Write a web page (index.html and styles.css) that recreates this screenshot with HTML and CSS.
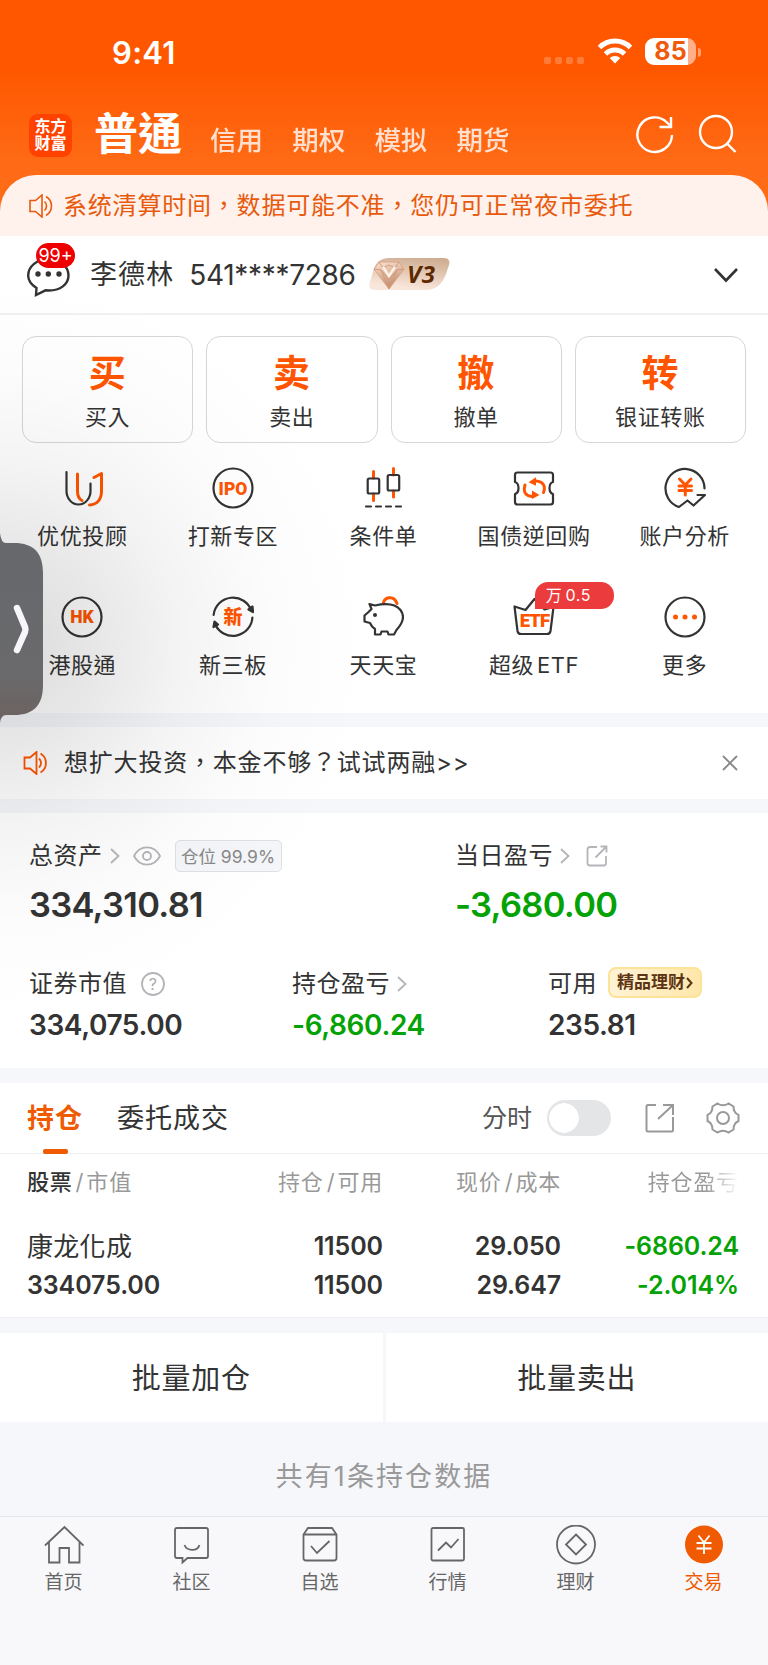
FILE: index.html
```
<!DOCTYPE html>
<html lang="zh-Hant">
<head>
  <title>交易</title>
  <meta charset="UTF-8">
  <meta name="viewport" content="width=device-width, initial-scale=1.0">
  <link rel="stylesheet" href="styles.css">
</head>
<body>
  <header class="top">
    <div class="status">
      <span class="time">9:41</span>
      <div class="status-icons">
        <div class="signal"><i></i><i></i><i></i><i></i></div>
        <svg class="wifi" width="36" height="26" viewBox="0 0 36 26" fill="none" stroke="#fff" stroke-width="5">
          <path d="M2.5 9.5a22 22 0 0 1 31 0"/>
          <path d="M8.5 16a13.5 13.5 0 0 1 19 0"/>
          <path d="M18 25.5l-5.3-5.4a7.6 7.6 0 0 1 10.6 0z" fill="#fff" stroke="none"/>
        </svg>
        <div class="battery">85</div>
        <div class="battery-cap"></div>
      </div>
    </div>
    <nav class="nav">
      <div class="logo">东方<br>财富</div>
      <span class="nav-main">普通</span>
      <span class="nav-item">信用</span>
      <span class="nav-item">期权</span>
      <span class="nav-item">模拟</span>
      <span class="nav-item">期货</span>
      <div class="nav-icons">
        <svg width="40" height="40" viewBox="0 0 40 40" fill="none" stroke="#fff" stroke-width="2.4">
          <path d="M37 21a17.3 17.3 0 1 1-5-12.500l4 4"/>
          <path d="M36 3v10H24.500"/>
        </svg>
        <svg width="40" height="40" viewBox="0 0 40 40" fill="none" stroke="#fff" stroke-width="2.4">
          <circle cx="18" cy="18" r="16"/>
          <path d="M29 29.500l8.500 8.500"/>
        </svg>
      </div>
    </nav>
  </header>

  <div class="notice">
    <svg width="24" height="24" viewBox="0 0 24 24" fill="none" stroke="#e85a0c" stroke-width="1.600">
      <path d="M1 6.500h5.500L13 1v22l-6.500-5.500H1z"/>
      <path d="M15.500 7.500a6 6 0 0 1 0 9M17 2.500a11 11 0 0 1 0 19"/>
    </svg>
    <span>系统清算时间，数据可能不准，您仍可正常夜市委托</span>
  </div>

  <section class="account">
    <div class="message">
      <svg width="46" height="42" viewBox="0 0 46 42" fill="none" stroke="#333" stroke-width="2.400">
        <path d="M10.500 32C5 28.500 2.200 24.500 2.200 19.500C2.200 10.500 11 3 22.500 3s20 7.500 20 16.500S34 34.500 23 34.500L19.500 34.300L10 39z"/>
        <g fill="#333" stroke="none"><circle cx="12" cy="18" r="2.700"/><circle cx="22.300" cy="18" r="2.700"/><circle cx="33" cy="18" r="2.700"/></g>
      </svg>
      <span class="message-count">99+</span>
    </div>
    <span class="name">李德林</span>
    <span class="number">541****7286</span>
    <svg class="level" width="82" height="33" viewBox="0 0 82 33">
      <defs>
        <linearGradient id="level-bg" x1="1" y1="0" x2="0.700" y2="1">
          <stop offset="0" stop-color="#cba88b"/><stop offset="1" stop-color="#f9e6da"/>
        </linearGradient>
        <linearGradient id="gem" x1="0" y1="0" x2="0.300" y2="1">
          <stop offset="0" stop-color="#fbe3d2"/><stop offset="1" stop-color="#c28d70"/>
        </linearGradient>
      </defs>
      <path d="M20 0h54q8 0 6 7l-3 9q-6 16-20 16H6q-7 0-5.500-7l4-13Q8 0 20 0z" fill="url(#level-bg)"/>
      <path d="M10 4h20l5 7-15 20L5 11z" fill="url(#gem)" stroke="#dba587"/>
      <path d="M5 11l7 1 8 10 8-10 7-1M10 4l4 6 6-3 6 3 4-6M12 12l8 19 8-19" fill="none" stroke="#d29b7b"/>
      <path d="M14 9l6 9 6-9" fill="none" stroke="#fff2e8" stroke-width="2.500"/>
      <text x="38" y="25" class="level-text" textLength="28">V3</text>
    </svg>
    <svg class="down" width="26" height="16" viewBox="0 0 26 16" fill="none" stroke="#333" stroke-width="2.600"><path d="M2 2l11 11.500L24 2"/></svg>
  </section>

  <section class="trade">
    <div class="trade-btn"><b>买</b><span>买入</span></div>
    <div class="trade-btn"><b>卖</b><span>卖出</span></div>
    <div class="trade-btn"><b>撤</b><span>撤单</span></div>
    <div class="trade-btn"><b>转</b><span>银证转账</span></div>
  </section>

  <section class="grid">
    <div class="cell">
      <svg class="icon" viewBox="0 0 42 42">
        <path d="M5.500 5v19c0 7 5 13.500 12 13.500S29.500 31 29.500 24v-7.500"/>
        <path class="o" d="M16.500 7v17c0 5 1.500 8 4.500 9.500M33 10.500l7.500-4V24c0 8-4 13.500-12 14"/>
      </svg>
      <span>优优投顾</span>
    </div>
    <div class="cell">
      <svg class="icon" viewBox="0 0 42 42"><circle cx="21" cy="21" r="19.500"/><text x="21" y="27.500" font-size="17.500">IPO</text></svg>
      <span>打新专区</span>
    </div>
    <div class="cell">
      <svg class="icon" viewBox="0 0 42 42">
        <path class="o" d="M11.500 4.500V11M11.500 27v6.500M31.500 1.500V8M31.500 24v6"/>
        <rect x="5.700" y="11.500" width="11.500" height="15" rx="1.500"/><rect x="25.700" y="8" width="11.500" height="15.500" rx="1.500"/>
        <path d="M4 39.500h36" stroke-dasharray="5 5"/>
      </svg>
      <span>条件单</span>
    </div>
    <div class="cell">
      <svg class="icon" viewBox="0 0 42 42">
        <path d="M4.500 5.500h33q2.500 0 2.500 2.500v7q-3.500 1-3.500 6t3.500 6v8q0 2.500-2.500 2.500h-33Q2 37.500 2 35v-8q3.500-1 3.500-6T2 15V8q0-2.500 2.500-2.500z"/>
        <path class="o" d="M19 29.500C12.500 29 10 25 12 18M23 14c7 .5 10 5 7.500 11.500"/>
        <path class="of" d="M15.500 15.200l7.500-5v8.500zM26.500 28l-7.500-4.500V32z"/>
      </svg>
      <span>国债逆回购</span>
    </div>
    <div class="cell">
      <svg class="icon" viewBox="0 0 42 42">
        <path d="M40.500 21.500A19.500 19.500 0 1 0 15 40l8.500-6.500 6 5L41 28h-7.500"/>
        <path class="o" d="M15.500 12l5.800 6 5.700-6M21.300 18v10M15 19h12.500M15 23.500h12.500"/>
      </svg>
      <span>账户分析</span>
    </div>
    <div class="cell">
      <svg class="icon" viewBox="0 0 42 42"><circle cx="21" cy="21" r="19.500"/><text x="21" y="27.300" font-size="17.500">HK</text></svg>
      <span>港股通</span>
    </div>
    <div class="cell">
      <svg class="icon" viewBox="0 0 42 42">
        <path d="M1.600 19A19.500 19.500 0 0 1 39.500 15M40.400 21.500A19.500 19.500 0 0 1 3 28"/>
        <path d="M36.500 13.500l4.500 2.500-.5-5.500zM1.500 31l1-5.500 3.500 3z" fill="#333"/>
        <text x="21" y="28" font-size="19">新</text>
      </svg>
      <span>新三板</span>
    </div>
    <div class="cell">
      <svg class="icon" viewBox="0 0 42 42">
        <path class="o" d="M21.500 6.500c2-6.500 11-6.500 13.500 1"/>
        <path d="M13 9.500c9-2 20-2 25.500 4.500 4.500 6 2 13.500-4 20L32 38.500h-5.500l-1-3h-6l-1 3H13V33c-2.500-1.500-4-3.500-5-6l-5.500-1.500v-6L6 16.500 9.500 13 7.500 8z"/>
        <circle cx="13" cy="19" r="2" fill="#333" stroke="none"/>
      </svg>
      <span>天天宝</span>
    </div>
    <div class="cell">
      <svg class="icon" viewBox="0 0 42 42">
        <path d="M1.500 10.500l3 24.500q.5 3 3.500 3h26q3 0 3.500-3L40.500 11l-9 2.500L21.500 3l-9 11z"/>
        <text class="narrow" x="21.500" y="31" font-size="18.500">ETF</text>
      </svg>
      <em class="tag">万 0.5</em>
      <span class="mixed">超级 ETF</span>
    </div>
    <div class="cell">
      <svg class="icon" viewBox="0 0 42 42"><circle cx="21" cy="21" r="19.500"/><g class="of"><circle cx="11.500" cy="21" r="2.500"/><circle cx="21" cy="21" r="2.500"/><circle cx="30.500" cy="21" r="2.500"/></g></svg>
      <span>更多</span>
    </div>
  </section>

  <section class="promo">
    <svg width="25" height="24" viewBox="0 0 24 24" fill="none" stroke="#ff5500" stroke-width="1.800">
      <path d="M1 6.500h5.500L13 1v22l-6.500-5.500H1z"/>
      <path d="M15.500 7.500a6 6 0 0 1 0 9M17 2.500a11 11 0 0 1 0 19"/>
    </svg>
    <span>想扩大投资，本金不够？试试两融&gt;&gt;</span>
    <svg class="close" width="16" height="16" viewBox="0 0 16 16" stroke="#888" stroke-width="1.800"><path d="M1 1l14 14M15 1L1 15"/></svg>
  </section>

  <section class="assets">
    <div class="totals">
      <div class="asset">
        <div class="asset-label">总资产
          <svg class="more" width="10" height="16" viewBox="0 0 10 16"><path d="M1 1l7.500 7L1 15"/></svg>
          <svg class="eye" width="28" height="20" viewBox="0 0 28 20"><path d="M1 10C7-1.500 21-1.500 27 10 21 21.500 7 21.500 1 10z"/><circle cx="14" cy="10" r="4"/></svg>
          <span class="ratio">仓位 99.9%</span>
        </div>
        <div class="asset-value">334,310.81</div>
      </div>
      <div class="asset">
        <div class="asset-label">当日盈亏
          <svg class="more" width="10" height="16" viewBox="0 0 10 16"><path d="M1 1l7.500 7L1 15"/></svg>
          <svg class="share" width="22" height="22" viewBox="0 0 22 22"><path d="M11 2H4Q1.500 2 1.500 4.500v13.500Q1.500 20.500 4 20.500h13.500q2.500 0 2.500-2.500v-7M9.500 12.500L20 2M14.500 1.500H20.500V7.500"/></svg>
        </div>
        <div class="asset-value green">-3,680.00</div>
      </div>
    </div>
    <div class="details">
      <div class="asset">
        <div class="asset-label">证券市值
          <svg class="help" width="24" height="24" viewBox="0 0 24 24"><circle cx="12" cy="12" r="11"/><text x="12" y="17.500">?</text></svg>
        </div>
        <div class="asset-value">334,075.00</div>
      </div>
      <div class="asset">
        <div class="asset-label">持仓盈亏
          <svg class="more" width="10" height="16" viewBox="0 0 10 16"><path d="M1 1l7.500 7L1 15"/></svg>
        </div>
        <div class="asset-value green">-6,860.24</div>
      </div>
      <div class="asset">
        <div class="asset-label">可用 <span class="wealth">精品理财<svg width="7" height="12" viewBox="0 0 7 12" fill="none" stroke="#5c3413" stroke-width="2"><path d="M1 1l4.500 5L1 11"/></svg></span></div>
        <div class="asset-value">235.81</div>
      </div>
    </div>
  </section>

  <section class="positions">
    <div class="tabs">
      <span class="tab active">持仓</span>
      <span class="tab">委托成交</span>
      <span class="minute">分时</span>
      <div class="switch"></div>
      <svg class="export" width="30" height="30" viewBox="0 0 30 30"><path d="M11 2H3Q1.500 2 1.500 3.500V27q0 1.500 1.500 1.500h23.500q1.500 0 1.500-1.500V14M13 16L27.500 2.500M18 2h10V12"/></svg>
      <svg class="gear" width="34" height="32" viewBox="0 0 34 32"><path d="M11.500 1.500q5.500 3.500 11 0l5 3q0 6.500 5 8.500v6q-5 2-5 8.500l-5 3q-5.500-3.500-11 0l-5-3q0-6.500-5-8.500v-6q5-2 5-8.500z"/><circle cx="17" cy="16" r="6"/></svg>
    </div>
    <div class="row head">
      <span><strong>股票</strong><i>/</i>市值</span>
      <span>持仓<i>/</i>可用</span>
      <span>现价<i>/</i>成本</span>
      <span class="fade">持仓盈亏</span>
    </div>
    <div class="row stock">
      <span class="stock-name">康龙化成</span><span>11500</span><span>29.050</span><span class="green">-6860.24</span>
      <span>334075.00</span><span>11500</span><span>29.647</span><span class="green">-2.014%</span>
    </div>
  </section>

  <section class="batch">
    <div>批量加仓</div>
    <div>批量卖出</div>
  </section>

  <p class="summary">共有1条持仓数据</p>

  <footer class="tabbar">
    <div class="tabbar-item">
      <svg viewBox="0 0 40 40"><path d="M1 20.500L20.500 2 39.500 20.500M5 17v20.500h10.500V23H25v14.500h10.500V17"/></svg>
      首页
    </div>
    <div class="tabbar-item">
      <svg viewBox="0 0 40 40"><path d="M5 3h29q2 0 2 2v26q0 2-2 2H15.500L10.500 37.500V33H5q-2 0-2-2V5q0-2 2-2zM12.500 20c2.500 6.500 13 6.500 15 0"/></svg>
      社区
    </div>
    <div class="tabbar-item">
      <svg viewBox="0 0 40 40"><path d="M8 3h24l4.500 6.500V33q0 2.500-2.500 2.500H6Q3.500 35.500 3.500 33V9.500zM3.500 9.500h33M11 21l6 7L29.500 16"/></svg>
      自选
    </div>
    <div class="tabbar-item">
      <svg viewBox="0 0 40 40"><rect x="3.500" y="3" width="32.500" height="32.500" rx="1.500"/><path d="M10 25.500l8-8 5 5L30.500 14"/></svg>
      行情
    </div>
    <div class="tabbar-item">
      <svg viewBox="0 0 40 40"><circle cx="20" cy="19.500" r="19"/><path d="M20 9.500l10 10-10 10-10-10z"/></svg>
      理财
    </div>
    <div class="tabbar-item current">
      <svg viewBox="0 0 40 40"><circle cx="20" cy="19.500" r="19"/><path d="M14.500 10.500l5.500 7 5.500-7M20 17.500V29M12.500 18h15M12.500 23.500h15"/></svg>
      交易
    </div>
  </footer>

  <!-- floating side handle and its shadow -->
  <div class="side-shade"></div>
  <svg class="side-handle" width="44" height="190" viewBox="0 0 44 190">
    <defs><linearGradient id="handle" x1="0" y1="0" x2="0" y2="1"><stop offset="0" stop-color="#66686c"/><stop offset="0.750" stop-color="#6a6a6c"/><stop offset="1" stop-color="#6b625f"/></linearGradient></defs>
    <path d="M0 0q1 10 6 10h8c20 0 29 10 29 30v112c0 20-9 30-29 30H6q-5 0-6 8z" fill="url(#handle)"/>
    <path d="M17 75l8 19q1 2.500 0 5l-8 18" fill="none" stroke="#f7f6fb" stroke-width="6.500" stroke-linecap="round" stroke-linejoin="round"/>
  </svg>
</body>
</html>
```
FILE: styles.css
```
* {
  box-sizing: border-box;
}
body {
  position: relative;
  margin: 0;
  width: 768px;
  height: 1665px;
  overflow: hidden;
  background: #f6f7fa;
  color: #333;
  font-family: Inter, "Noto Sans CJK TC", sans-serif;
  font-size: 24px;
  line-height: 1;
}
svg {
  display: block;
  flex: none;
}
span, em {
  white-space: nowrap;
}
.green {
  color: #05a205;
}

/* header */
.top {
  height: 212px;
  margin-bottom: -37px;
  background: linear-gradient(#ff5700 0, #ff5700 70px, #ff6a15 160px, #ff6c18);
  color: #fff;
}
.status {
  display: flex;
  justify-content: space-between;
  align-items: center;
  height: 104px;
  padding: 0 67px 0 112px;
}
.time {
  font-size: 31px;
  font-weight: 600;
  letter-spacing: .3px;
}
.status-icons {
  display: flex;
  align-items: center;
}
.signal {
  display: flex;
  gap: 4px;
  margin: 16px 13px 0 0;
}
.signal i {
  width: 7px;
  height: 7px;
  border-radius: 2px;
  background: rgba(255, 255, 255, .22);
}
.wifi {
  margin-top: -2px;
}
.battery {
  width: 51px;
  height: 27px;
  margin: -1px 0 0 12px;
  border-radius: 9px;
  background: linear-gradient(90deg, #fff 43px, #ffb08a 43px);
  color: #f05a0c;
  font-size: 25px;
  font-weight: 700;
  line-height: 27px;
  text-align: center;
}
.battery-cap {
  width: 3px;
  height: 9px;
  margin-left: 2px;
  border-radius: 0 3px 3px 0;
  background: #ffa071;
}
.nav {
  display: flex;
  align-items: center;
  height: 62px;
  padding: 0 30px 0 29px;
}
.logo {
  width: 43px;
  height: 43px;
  padding-top: 4px;
  border-radius: 9px;
  background: #ff4200;
  font-family: "Liberation Serif", "Noto Sans CJK SC", serif;
  font-size: 16px;
  font-weight: 700;
  line-height: 17px;
  text-align: center;
}
.nav-main {
  margin: -3px 28px 0 22px;
  font-size: 44px;
  font-weight: 700;
}
.nav-item {
  margin: 11px 29.2px 0 0;
  font-size: 26.500px;
  font-weight: 500;
  opacity: .8;
}
.nav-icons {
  display: flex;
  gap: 23px;
  margin-left: auto;
  margin-top: -2px;
}
.notice {
  display: flex;
  align-items: center;
  gap: 10px;
  height: 61px;
  padding-left: 29px;
  border-radius: 36px 36px 0 0;
  background: #fff1ec;
  color: #e85a0c;
  letter-spacing: .8px;
}

/* account */
.account {
  display: flex;
  align-items: center;
  height: 79px;
  padding: 0 29px 0 26px;
  border-bottom: 2px solid #f1f1f2;
  background: #fff;
}
.message {
  position: relative;
  margin-top: 5px;
}
.message-count {
  position: absolute;
  top: -13px;
  left: 10px;
  width: 39px;
  height: 25px;
  border-radius: 13px;
  background: #ee0000;
  color: #fff;
  font-size: 18px;
  line-height: 25px;
  text-align: center;
}
.name {
  margin-left: 18px;
  font-size: 27px;
  letter-spacing: 1.1px;
}
.number {
  margin-left: 15px;
  font-size: 28px;
  letter-spacing: -.3px;
}
.level {
  margin-left: 13px;
}
.level-text {
  fill: #5d2900;
  font: italic 700 24px "Open Sans", sans-serif;
}
.down {
  margin-left: auto;
}

/* trade buttons */
.trade {
  display: grid;
  grid-template-columns: repeat(4, 1fr);
  gap: 13px;
  padding: 21px 22px 0;
  background: #fff;
}
.trade-btn {
  display: flex;
  flex-direction: column;
  align-items: center;
  gap: 14px;
  height: 107px;
  padding-top: 18px;
  border: 1px solid #d5d6d8;
  border-radius: 14px;
  font-size: 22px;
  letter-spacing: .7px;
}
.trade-btn b {
  color: #ff5500;
  font-size: 37px;
}

/* function grid */
.grid {
  display: grid;
  grid-template-columns: repeat(5, 150.6px);
  grid-auto-rows: 128.500px;
  height: 270px;
  padding: 24px 7px 0;
  background: #fff;
}
.cell {
  position: relative;
  display: flex;
  flex-direction: column;
  align-items: center;
  gap: 16px;
  font-size: 22px;
  letter-spacing: .6px;
}
.mixed {
  word-spacing: -4px;
}
.icon {
  width: 42px;
  height: 42px;
  fill: none;
  stroke: #333;
  stroke-width: 2.200;
  stroke-linecap: round;
  stroke-linejoin: round;
}
.icon .o {
  stroke: #ff5500;
  stroke-width: 3;
}
.icon .of {
  fill: #ff5500;
  stroke: none;
}
.icon text {
  fill: #ff5500;
  stroke: none;
  font-family: Roboto, "Noto Sans CJK SC", sans-serif;
  font-weight: 900;
  letter-spacing: 0;
  text-anchor: middle;
}
.icon .narrow {
  letter-spacing: -1px;
}
.tag {
  position: absolute;
  top: -14px;
  left: 76px;
  width: 79px;
  height: 27px;
  padding-left: 11px;
  border-radius: 13px 13px 13px 0;
  background: #ec3b3d;
  color: #fff;
  font-size: 16px;
  font-style: normal;
  line-height: 27px;
  word-spacing: -2px;
}

/* promo */
.promo {
  display: flex;
  align-items: center;
  gap: 16px;
  height: 72px;
  margin: 14px 0;
  padding: 0 30px 0 23px;
  background: #fff;
  letter-spacing: .8px;
}
.close {
  margin-left: auto;
}

/* assets */
.assets {
  height: 255px;
  padding: 25px 29px 0;
  background: #fff;
}
.totals {
  display: grid;
  grid-template-columns: 426px 1fr;
  height: 128px;
}
.details {
  display: grid;
  grid-template-columns: 263px 256px 1fr;
}
.asset-label {
  display: flex;
  align-items: center;
  height: 36px;
  letter-spacing: .5px;
}
.asset-value {
  font-size: 28px;
  font-weight: 600;
  letter-spacing: -.4px;
  margin-top: 9px;
}
.totals .asset-value {
  margin-top: 14px;
  font-size: 34.500px;
  letter-spacing: -.7px;
}
.assets svg {
  fill: none;
}
.more, .share, .eye, .help {
  stroke: #b4b5b8;
  stroke-width: 1.800;
}
.more {
  margin-left: 7px;
}
.eye {
  margin-left: 13px;
}
.share {
  margin-left: 16px;
}
.help {
  margin-left: 14px;
}
.help text {
  fill: #aaa;
  stroke: none;
  font-size: 16px;
  text-anchor: middle;
}
.ratio {
  margin-left: 14px;
  width: 107px;
  height: 32px;
  border: 1px solid #dfe0e4;
  border-radius: 5px;
  background: #f5f6f9;
  color: #888;
  font-size: 17.500px;
  letter-spacing: 0;
  line-height: 31px;
  text-align: center;
}
.wealth {
  display: flex;
  align-items: center;
  justify-content: center;
  gap: 1px;
  width: 94px;
  height: 31px;
  margin: -3px 0 0 11px;
  border: 2px solid #fee297;
  border-radius: 8px;
  background: linear-gradient(90deg, #fff3d6, #ffe7ab);
  color: #5c3413;
  font-size: 17px;
  font-weight: 700;
  letter-spacing: 0;
}

/* positions */
.positions {
  height: 235px;
  margin-top: 15px;
  background: #fff;
  border-bottom: 1px solid #eeeff1;
}
.tabs {
  display: flex;
  align-items: center;
  height: 71px;
  padding: 0 28px 0 27px;
  border-bottom: 1px solid #eeeff1;
}
.tab {
  position: relative;
  margin-right: 34px;
  font-size: 27px;
  letter-spacing: 1px;
}
.tab.active {
  color: #f05a00;
  font-weight: 700;
}
.tab.active::after {
  content: "";
  position: absolute;
  left: 16px;
  bottom: -22px;
  width: 25px;
  height: 5px;
  border-radius: 2px;
  background: #f05a00;
}
.minute {
  margin-left: auto;
  color: #555;
  font-size: 25px;
}
.switch {
  width: 64px;
  height: 36px;
  margin: 0 34px 0 15px;
  border-radius: 18px;
  background: radial-gradient(circle at 17px 18px, #fff 14.500px, #e4e5e7 15px);
}
.export, .gear {
  fill: none;
  stroke: #999;
  stroke-width: 2;
}
.gear {
  margin-left: 31px;
}
.row {
  display: grid;
  grid-template-columns: 179px 177px 178px 178px;
  padding-left: 27px;
}
.row span:not(:nth-child(4n + 1)) {
  text-align: right;
}
.head {
  padding-top: 17px;
  color: #999;
  font-size: 22px;
  letter-spacing: .8px;
}
.head i {
  margin: 0 2px 0 3px;
  font-style: normal;
}
.head strong {
  color: #333;
  font-weight: 500;
}
.fade {
  -webkit-mask-image: linear-gradient(90deg, #000 145px, transparent 178px);
  mask-image: linear-gradient(90deg, #000 145px, transparent 178px);
}
.stock {
  grid-auto-rows: 39px;
  padding-top: 41px;
  font-size: 25px;
  font-weight: 600;
  letter-spacing: -.1px;
}
.stock .stock-name {
  font-size: 26px;
  font-weight: 400;
  letter-spacing: .3px;
}

/* batch actions */
.batch {
  display: grid;
  grid-template-columns: 1fr 1fr;
  gap: 3px;
  margin-top: 15px;
}
.batch div {
  height: 89px;
  background: #fff;
  font-size: 29px;
  letter-spacing: .7px;
  line-height: 91px;
  text-align: center;
}
.summary {
  height: 94px;
  margin: 0;
  padding-top: 15px;
  color: #999;
  font-size: 27px;
  letter-spacing: 2.1px;
  line-height: 80px;
  text-align: center;
}

/* tab bar */
.tabbar {
  display: grid;
  grid-template-columns: repeat(6, 128px);
  height: 149px;
  padding-top: 8px;
  border-top: 1px solid #e6e7e9;
  background: #f8f8fb;
  color: #666;
  font-size: 19px;
}
.tabbar-item {
  display: flex;
  flex-direction: column;
  align-items: center;
  gap: 8px;
  padding-right: 1px;
}
.tabbar svg {
  width: 40px;
  height: 40px;
  fill: none;
  stroke: #666;
  stroke-width: 1.800;
}
.tabbar .current {
  color: #f05a00;
}
.current circle {
  fill: #f05a00;
  stroke: none;
}
.current path {
  stroke: #fff;
}

/* side handle */
.side-shade {
  position: absolute;
  top: 290px;
  left: 0;
  width: 400px;
  height: 740px;
  background: radial-gradient(ellipse 370px 370px at 0 48%, rgba(0, 0, 0, .145), rgba(0, 0, 0, .09) 28%, rgba(0, 0, 0, .045) 50%, rgba(0, 0, 0, .012) 75%, transparent);
  pointer-events: none;
}
.side-handle {
  position: absolute;
  top: 533px;
  left: 0;
}
```
